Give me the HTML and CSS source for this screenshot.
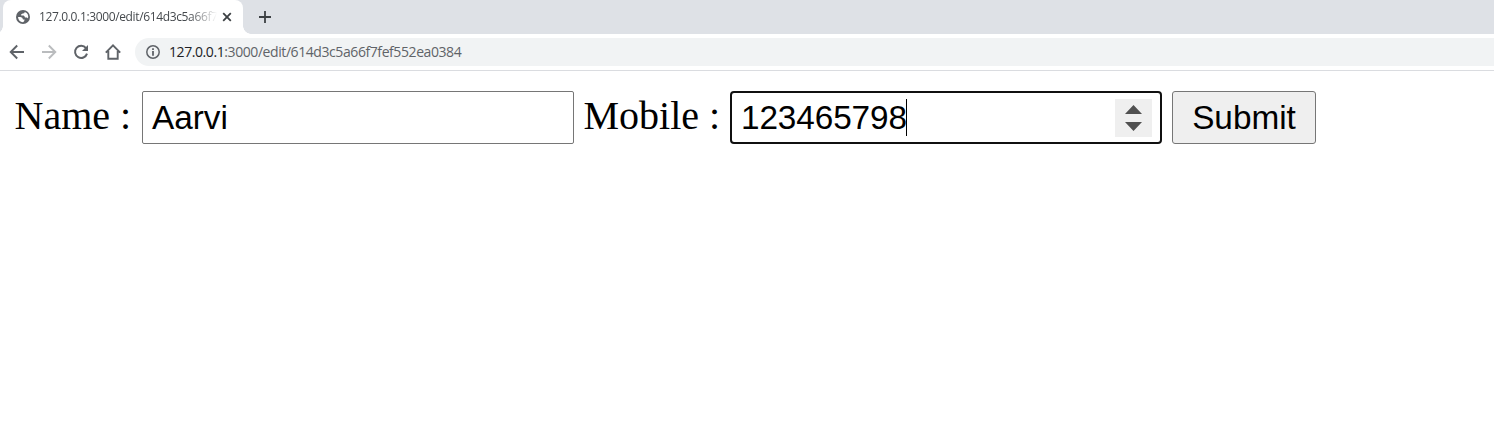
FILE: index.html
```html
<!DOCTYPE html>
<html lang="en">
<head>
<meta charset="utf-8">
<title>Edit</title>
<link rel="stylesheet" href="styles.css">
</head>
<body>
<header class="tabstrip">
  <div class="tab">
    <svg class="globe" width="14" height="14" viewBox="0 0 14 14"><circle cx="7" cy="7" r="7" fill="#5f6368"/><path d="M2 7H4.4Q6.8 7.2 7 9.4H8.6Q8.4 11.6 7 12.2Q2.4 12 2 7ZM8.8 1.9Q8.6 3.4 6.8 3.6L5.2 4.2V5.4H7.6Q8.6 5.8 9 7.6H10.8Q11.8 8 12 8.6Q13.2 3.6 8.8 1.9Z" fill="#fff"/></svg>
    <span class="tab-title">127.0.0.1:3000/edit/614d3c5a66f7</span>
    <svg class="close" width="10" height="10" viewBox="0 0 10 10"><path d="M1.2 1.2 8.8 8.8M8.8 1.2 1.2 8.8" stroke="#3c4043" stroke-width="1.8"/></svg>
  </div>
  <svg class="plus" width="12" height="12" viewBox="0 0 12 12"><path d="M6 0V12M0 6H12" stroke="#3c4043" stroke-width="1.8"/></svg>
</header>
<nav class="toolbar">
  <svg width="16" height="16" viewBox="0 0 16 16" fill="none" stroke="#5f6368" stroke-width="1.9"><path d="M15 8H2.5M8.2 1.5 1.7 8 8.2 14.5"/></svg>
  <svg width="16" height="16" viewBox="0 0 16 16" fill="none" stroke="#babcbe" stroke-width="1.9"><path d="M1 8H13.5M7.8 1.5 14.3 8 7.8 14.5"/></svg>
  <svg width="16" height="16" viewBox="0 0 16 16"><path d="M13 4.1A6.1 6.1 0 1 0 14 9.6" fill="none" stroke="#5f6368" stroke-width="2"/><path d="M15 1V7H9Z" fill="#5f6368"/></svg>
  <svg width="16" height="16" viewBox="0 0 16 16" fill="none" stroke="#5f6368" stroke-width="1.9"><path d="M.8 8.7 8 1.4 15.2 8.7M3.3 7V14.8H12.7V7"/></svg>
  <div class="address">
    <svg width="14" height="14" viewBox="0 0 14 14"><circle cx="7" cy="7" r="6.2" fill="none" stroke="#5f6368" stroke-width="1.5"/><path d="M7 3.3V4.9M7 6.1V10.7" stroke="#5f6368" stroke-width="1.8"/></svg>
    <span class="url"><span class="host">127.0.0.1</span>:3000/edit/614d3c5a66f7fef552ea0384</span>
  </div>
</nav>
<main class="form">
  <span class="label name">Name :</span>
  <div class="field">Aarvi</div>
  <span class="label mobile">Mobile :</span>
  <div class="field focused"><span class="value">123465798</span><span class="caret"></span>
    <svg class="spinner" width="37" height="38" viewBox="0 0 37 38"><path d="M0 0H37V38H0Z" fill="#efefef"/><path d="M10 15 18.5 6 27 15ZM10 23H27L18.5 32Z" fill="#505050"/></svg>
  </div>
  <button class="submit">Submit</button>
</main>
</body>
</html>
```
FILE: styles.css
```css
* { box-sizing: border-box; }
body { margin: 0; background: #fff; overflow: hidden; }
svg { display: block; flex: none; }
.tabstrip { height: 34px; background: #dee1e6; display: flex; align-items: center; padding-left: 3px; }
.tab {
  width: 240px; height: 34px; background: #fff; border-radius: 8px 8px 0 0;
  display: flex; align-items: center; padding-left: 13px; position: relative;
}
.tab::before, .tab::after { content: ""; position: absolute; bottom: 0; width: 8px; height: 8px; }
.tab::before { left: -8px; background: radial-gradient(circle at 0 0, transparent 7.5px, #fff 8px); }
.tab::after { right: -8px; background: radial-gradient(circle at 100% 0, transparent 7.5px, #fff 8px); }
.tab-title {
  margin-left: 9px; width: 183px; flex: none; white-space: nowrap;
  font: 12px/18px "Open Sans", sans-serif; letter-spacing: -0.36px; color: #45494d;
  -webkit-mask-image: linear-gradient(90deg, #000 150px, transparent 178px);
  mask-image: linear-gradient(90deg, #000 150px, transparent 178px);
}
.close { margin-left: 0; }
.plus { margin-left: 16px; }
.toolbar {
  height: 37px; border-bottom: 1px solid #dadce0; display: flex; align-items: center;
  padding-left: 9px; gap: 16px;
}
.address {
  flex: 1; height: 28px; margin-left: -2px; background: #f1f3f4; border-radius: 14px 0 0 14px;
  display: flex; align-items: center; padding-left: 11px; gap: 9px;
}
.url { font: 14px/20px "Open Sans", sans-serif; letter-spacing: -0.42px; color: #5f6368; white-space: nowrap; }
.host { color: #202124; }
.form { display: flex; padding: 20px 0 0 14.5px; height: 73px; }
.label { font: 40px/50px "Liberation Serif", serif; color: #000; white-space: nowrap; flex: none; }
.name { width: 127.5px; }
.mobile { width: 156px; padding-left: 9.5px; }
.field {
  width: 432px; height: 53px; border: 1px solid #767676; border-radius: 2px; padding: 0 9px;
  font: 33.333px/51px "Liberation Sans", sans-serif; color: #000; display: flex; align-items: center;
}
.focused { border: 2px solid #101010; border-radius: 4px; line-height: 49px; padding: 0 8px 0 9px; }
.value { letter-spacing: -0.1px; }
.caret { width: 1px; height: 37px; background: #000; margin-left: -1px; }
.spinner { margin-left: auto; }
.submit {
  width: 144px; height: 53px; margin-left: 10px; padding: 0; border: 1px solid #767676;
  border-radius: 3px; background: #efefef; color: #000; font: 33.333px/51px "Liberation Sans", sans-serif;
}
```
